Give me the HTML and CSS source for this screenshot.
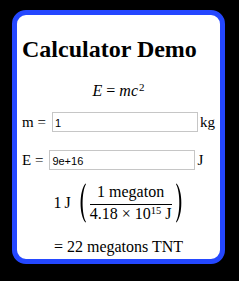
FILE: index.html
```html
<!DOCTYPE html>
<html lang="en">
<head>
    <meta charset="UTF-8">
    <meta name="viewport" content="width=device-width, initial-scale=1.0">
    <title>Calculator Demo</title>
    <link rel="stylesheet" href="styles.css">
</head>
<body>
    <div class="card">
        <h1 class="title">Calculator Demo</h1>
        <div class="formula"><i>E</i><span class="rel">=</span><i>m</i><i>c</i><sup>2</sup></div>
        <div class="field">
            <span class="label">m =</span>
            <input class="num" type="text" value="1">
            <span class="unit">kg</span>
        </div>
        <div class="field field-energy">
            <span class="label">E =</span>
            <input class="num" type="text" value="9e+16">
            <span class="unit">J</span>
        </div>
        <div class="convert">
            <span class="qty">1<span class="thin"></span>J</span>
            <svg class="paren paren-left" width="8" height="40" viewBox="0 0 8 40">
                <path d="M7.5 0.5 C1 8 1 32 7.5 39.5 L8 39 C3.5 31 3.5 9 8 1 Z"/>
            </svg>
            <div class="frac">
                <div class="numer">1 megaton</div>
                <div class="bar"></div>
                <div class="denom">4.18<span class="bin">&times;</span>10<sup>15</sup> J</div>
            </div>
            <svg class="paren paren-right" width="8" height="40" viewBox="0 0 8 40">
                <path d="M0.5 0.5 C7 8 7 32 0.5 39.5 L0 39 C4.5 31 4.5 9 0 1 Z"/>
            </svg>
        </div>
        <div class="result">= 22 megatons TNT</div>
    </div>
</body>
</html>
```

FILE: styles.css
```css
html, body {
    background: #000;
}

body {
    margin: 0;
    font-family: "Liberation Serif", "Times New Roman", serif;
    color: #000;
}

.card {
    width: 213px;
    margin: 10px 0 0 12px;
    padding: 20px 5px 2px;
    box-sizing: border-box;
    background: #fff;
    border: 5px solid #2447ff;
    border-radius: 14px;
}

.title {
    margin: 0;
    font-size: 24px;
    line-height: 28px;
    font-weight: bold;
}

.formula {
    margin-top: 18px;
    font-size: 16px;
    line-height: 20px;
    text-align: center;
}

.rel {
    margin: 0 4px;
}

sup {
    position: relative;
    top: -5px;
    vertical-align: baseline;
    font-size: 11px;
    line-height: 0;
    margin-left: 1px;
}

.field {
    display: flex;
    align-items: center;
    height: 20px;
    margin-top: 11px;
    font-size: 15px;
    line-height: 20px;
}

.field-energy {
    margin-top: 18px;
}

.num {
    width: 146px;
    height: 20px;
    margin: 0 0 0 6px;
    padding: 2px 2px 0;
    box-sizing: border-box;
    border: 1px solid #c6c6c6;
    border-radius: 0;
    background: #fff;
    font-family: "Liberation Sans", Arial, sans-serif;
    font-size: 11px;
    color: #000;
    outline: none;
}

.unit {
    margin-left: 2px;
}

.convert {
    display: flex;
    align-items: center;
    justify-content: center;
    margin-top: 13px;
    font-size: 16px;
    line-height: 18px;
}

.thin {
    display: inline-block;
    width: 3px;
}

.paren {
    display: block;
    fill: #000;
}

.paren-left {
    margin: 0 3px 0 7px;
}

.paren-right {
    margin-left: 3px;
}

.frac {
    display: flex;
    flex-direction: column;
    align-items: center;
    padding: 0 1px;
}

.bar {
    align-self: stretch;
    height: 1px;
    margin-top: 3px;
    background: #000;
}

.bin {
    margin: 0 4px;
}

.denom sup {
    margin-left: 0;
    font-size: 10.5px;
}

.result {
    margin-top: 14px;
    font-size: 16px;
    line-height: 20px;
    text-align: center;
}
```
